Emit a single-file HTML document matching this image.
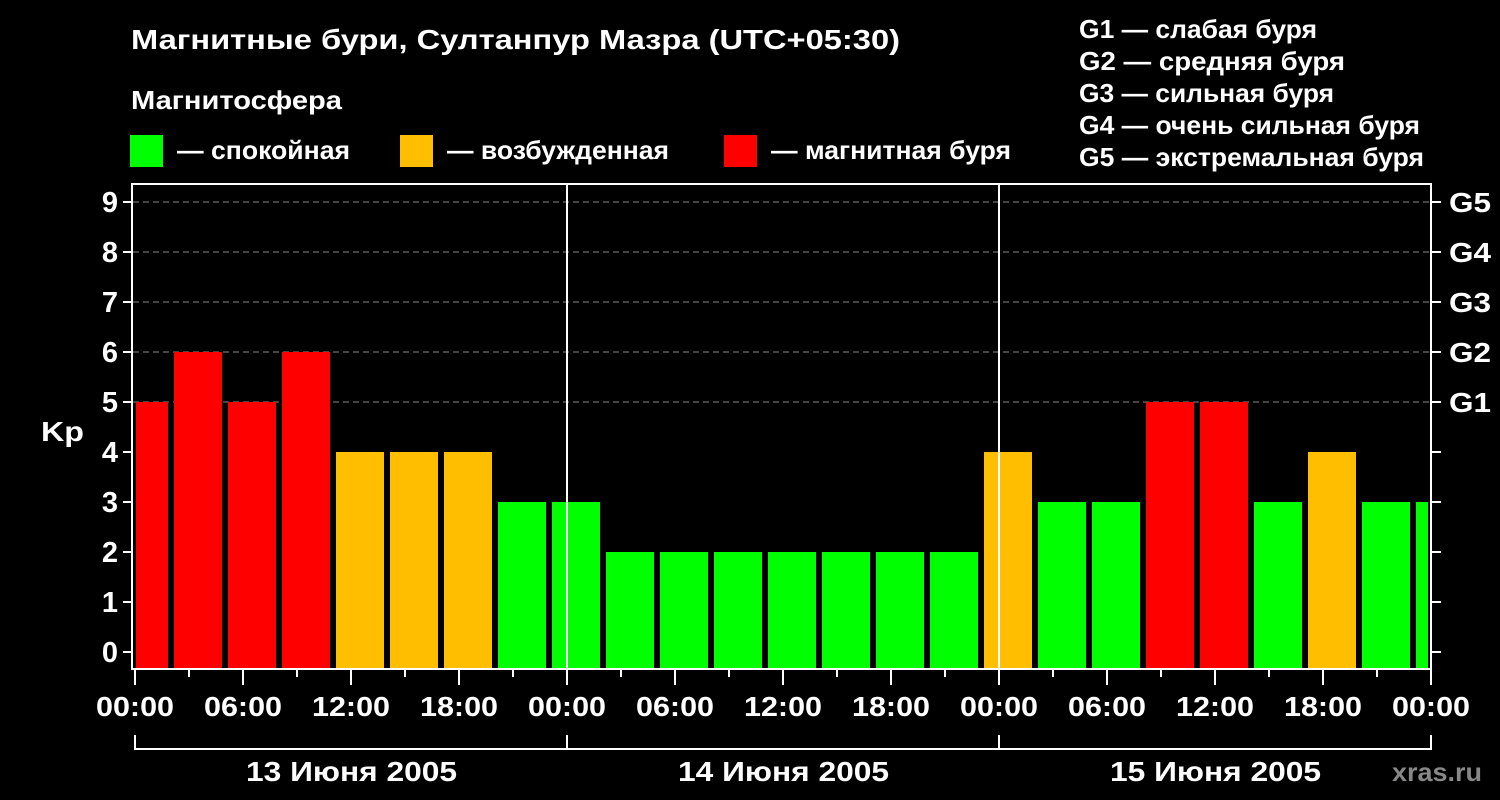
<!DOCTYPE html>
<html><head><meta charset="utf-8"><style>
html,body{margin:0;padding:0;background:#000;}
svg{display:block}
text{font-family:"Liberation Sans",sans-serif;font-weight:bold;fill:#fff}
</style></head><body>
<svg width="1500" height="800" viewBox="0 0 1500 800">
<rect width="1500" height="800" fill="#000"/>
<text x="131" y="49" font-size="28" textLength="769" lengthAdjust="spacingAndGlyphs">Магнитные бури, Султанпур Мазра (UTC+05:30)</text>
<text x="131" y="109" font-size="26" textLength="211" lengthAdjust="spacingAndGlyphs">Магнитосфера</text>
<rect x="130" y="135" width="33" height="32" fill="#00ff00"/>
<text x="177" y="159" font-size="26" textLength="173" lengthAdjust="spacingAndGlyphs">— спокойная</text>
<rect x="400" y="135" width="33" height="32" fill="#ffbf00"/>
<text x="447" y="159" font-size="26" textLength="222" lengthAdjust="spacingAndGlyphs">— возбужденная</text>
<rect x="724" y="135" width="33" height="32" fill="#ff0000"/>
<text x="771" y="159" font-size="26" textLength="240" lengthAdjust="spacingAndGlyphs">— магнитная буря</text>
<g font-size="26">
<text x="1079" y="38" textLength="238" lengthAdjust="spacingAndGlyphs">G1 — слабая буря</text>
<text x="1079" y="70" textLength="266" lengthAdjust="spacingAndGlyphs">G2 — средняя буря</text>
<text x="1079" y="102" textLength="255" lengthAdjust="spacingAndGlyphs">G3 — сильная буря</text>
<text x="1079" y="134" textLength="341" lengthAdjust="spacingAndGlyphs">G4 — очень сильная буря</text>
<text x="1079" y="166" textLength="345" lengthAdjust="spacingAndGlyphs">G5 — экстремальная буря</text>
</g>
<g stroke="#888" stroke-width="1" stroke-dasharray="6,4">
<line x1="133" y1="202" x2="1431" y2="202"/>
<line x1="133" y1="252" x2="1431" y2="252"/>
<line x1="133" y1="302" x2="1431" y2="302"/>
<line x1="133" y1="352" x2="1431" y2="352"/>
<line x1="133" y1="402" x2="1431" y2="402"/>
</g>
<g>
<rect x="136" y="402" width="32" height="266" fill="#f00"/>
<rect x="174" y="352" width="48" height="316" fill="#f00"/>
<rect x="228" y="402" width="48" height="266" fill="#f00"/>
<rect x="282" y="352" width="48" height="316" fill="#f00"/>
<rect x="336" y="452" width="48" height="216" fill="#ffbf00"/>
<rect x="390" y="452" width="48" height="216" fill="#ffbf00"/>
<rect x="444" y="452" width="48" height="216" fill="#ffbf00"/>
<rect x="498" y="502" width="48" height="166" fill="#0f0"/>
<rect x="552" y="502" width="48" height="166" fill="#0f0"/>
<rect x="606" y="552" width="48" height="116" fill="#0f0"/>
<rect x="660" y="552" width="48" height="116" fill="#0f0"/>
<rect x="714" y="552" width="48" height="116" fill="#0f0"/>
<rect x="768" y="552" width="48" height="116" fill="#0f0"/>
<rect x="822" y="552" width="48" height="116" fill="#0f0"/>
<rect x="876" y="552" width="48" height="116" fill="#0f0"/>
<rect x="930" y="552" width="48" height="116" fill="#0f0"/>
<rect x="984" y="452" width="48" height="216" fill="#ffbf00"/>
<rect x="1038" y="502" width="48" height="166" fill="#0f0"/>
<rect x="1092" y="502" width="48" height="166" fill="#0f0"/>
<rect x="1146" y="402" width="48" height="266" fill="#f00"/>
<rect x="1200" y="402" width="48" height="266" fill="#f00"/>
<rect x="1254" y="502" width="48" height="166" fill="#0f0"/>
<rect x="1308" y="452" width="48" height="216" fill="#ffbf00"/>
<rect x="1362" y="502" width="48" height="166" fill="#0f0"/>
<rect x="1416" y="502" width="12" height="166" fill="#0f0"/>
</g>
<g stroke="#fff" stroke-width="2" fill="none">
<rect x="132" y="184" width="1299" height="485"/>
<line x1="567" y1="183" x2="567" y2="669"/>
<line x1="999" y1="183" x2="999" y2="669"/>
</g>
<g stroke="#fff" stroke-width="2">
<line x1="123" y1="202" x2="132" y2="202"/><line x1="123" y1="252" x2="132" y2="252"/>
<line x1="123" y1="302" x2="132" y2="302"/><line x1="123" y1="352" x2="132" y2="352"/>
<line x1="123" y1="402" x2="132" y2="402"/><line x1="123" y1="452" x2="132" y2="452"/>
<line x1="123" y1="502" x2="132" y2="502"/><line x1="123" y1="552" x2="132" y2="552"/>
<line x1="123" y1="602" x2="132" y2="602"/><line x1="123" y1="652" x2="132" y2="652"/>
<line x1="1431" y1="202" x2="1441" y2="202"/><line x1="1431" y1="252" x2="1441" y2="252"/>
<line x1="1431" y1="302" x2="1441" y2="302"/><line x1="1431" y1="352" x2="1441" y2="352"/>
<line x1="1431" y1="402" x2="1441" y2="402"/><line x1="1431" y1="452" x2="1441" y2="452"/>
<line x1="1431" y1="502" x2="1441" y2="502"/><line x1="1431" y1="552" x2="1441" y2="552"/>
<line x1="1431" y1="602" x2="1441" y2="602"/><line x1="1431" y1="652" x2="1441" y2="652"/>
</g>
<g stroke="#fff" stroke-width="2">
<line x1="135" y1="669" x2="135" y2="685"/><line x1="189" y1="669" x2="189" y2="677"/>
<line x1="243" y1="669" x2="243" y2="685"/><line x1="297" y1="669" x2="297" y2="677"/>
<line x1="351" y1="669" x2="351" y2="685"/><line x1="405" y1="669" x2="405" y2="677"/>
<line x1="459" y1="669" x2="459" y2="685"/><line x1="513" y1="669" x2="513" y2="677"/>
<line x1="567" y1="669" x2="567" y2="685"/><line x1="621" y1="669" x2="621" y2="677"/>
<line x1="675" y1="669" x2="675" y2="685"/><line x1="729" y1="669" x2="729" y2="677"/>
<line x1="783" y1="669" x2="783" y2="685"/><line x1="837" y1="669" x2="837" y2="677"/>
<line x1="891" y1="669" x2="891" y2="685"/><line x1="945" y1="669" x2="945" y2="677"/>
<line x1="999" y1="669" x2="999" y2="685"/><line x1="1053" y1="669" x2="1053" y2="677"/>
<line x1="1107" y1="669" x2="1107" y2="685"/><line x1="1161" y1="669" x2="1161" y2="677"/>
<line x1="1215" y1="669" x2="1215" y2="685"/><line x1="1269" y1="669" x2="1269" y2="677"/>
<line x1="1323" y1="669" x2="1323" y2="685"/><line x1="1377" y1="669" x2="1377" y2="677"/>
<line x1="1431" y1="669" x2="1431" y2="685"/>
</g>
<g stroke="#fff" stroke-width="2" fill="none">
<polyline points="135,735 135,749 1431,749 1431,735"/>
<line x1="567" y1="735" x2="567" y2="749"/>
<line x1="999" y1="735" x2="999" y2="749"/>
</g>
<g font-size="29" text-anchor="end">
<text x="118" y="212">9</text><text x="118" y="262">8</text><text x="118" y="312">7</text>
<text x="118" y="362">6</text><text x="118" y="412">5</text><text x="118" y="462">4</text>
<text x="118" y="512">3</text><text x="118" y="562">2</text><text x="118" y="612">1</text>
<text x="118" y="662">0</text>
</g>
<text x="41" y="441" font-size="28" textLength="43" lengthAdjust="spacingAndGlyphs">Kp</text>
<g font-size="28">
<text x="1449" y="212" textLength="42" lengthAdjust="spacingAndGlyphs">G5</text>
<text x="1449" y="262" textLength="42" lengthAdjust="spacingAndGlyphs">G4</text>
<text x="1449" y="312" textLength="42" lengthAdjust="spacingAndGlyphs">G3</text>
<text x="1449" y="362" textLength="42" lengthAdjust="spacingAndGlyphs">G2</text>
<text x="1449" y="412" textLength="42" lengthAdjust="spacingAndGlyphs">G1</text>
</g>
<g font-size="28">
<text x="96" y="716" textLength="78" lengthAdjust="spacingAndGlyphs">00:00</text>
<text x="204" y="716" textLength="78" lengthAdjust="spacingAndGlyphs">06:00</text>
<text x="312" y="716" textLength="78" lengthAdjust="spacingAndGlyphs">12:00</text>
<text x="420" y="716" textLength="78" lengthAdjust="spacingAndGlyphs">18:00</text>
<text x="528" y="716" textLength="78" lengthAdjust="spacingAndGlyphs">00:00</text>
<text x="636" y="716" textLength="78" lengthAdjust="spacingAndGlyphs">06:00</text>
<text x="744" y="716" textLength="78" lengthAdjust="spacingAndGlyphs">12:00</text>
<text x="852" y="716" textLength="78" lengthAdjust="spacingAndGlyphs">18:00</text>
<text x="960" y="716" textLength="78" lengthAdjust="spacingAndGlyphs">00:00</text>
<text x="1068" y="716" textLength="78" lengthAdjust="spacingAndGlyphs">06:00</text>
<text x="1176" y="716" textLength="78" lengthAdjust="spacingAndGlyphs">12:00</text>
<text x="1284" y="716" textLength="78" lengthAdjust="spacingAndGlyphs">18:00</text>
<text x="1392" y="716" textLength="78" lengthAdjust="spacingAndGlyphs">00:00</text>
<text x="246" y="781" textLength="211" lengthAdjust="spacingAndGlyphs">13 Июня 2005</text>
<text x="678" y="781" textLength="211" lengthAdjust="spacingAndGlyphs">14 Июня 2005</text>
<text x="1110" y="781" textLength="211" lengthAdjust="spacingAndGlyphs">15 Июня 2005</text>
</g>
<text x="1392" y="781" font-size="26" style="fill:#888" textLength="90" lengthAdjust="spacingAndGlyphs">xras.ru</text>
</svg>
</body></html>
